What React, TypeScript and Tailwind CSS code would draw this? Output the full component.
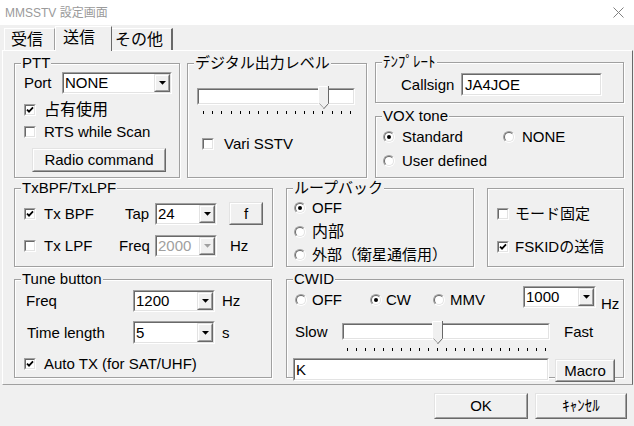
import React from "react";

type Kids = { children?: React.ReactNode; className?: string };

function Sunken({ children, className = "" }: Kids) {
  return (
    <div className={`border border-t-[#a0a0a0] border-l-[#a0a0a0] border-r-white border-b-white ${className}`}>
      <div className="h-full w-full border border-t-[#696969] border-l-[#696969] border-r-[#e3e3e3] border-b-[#e3e3e3] bg-white">
        {children}
      </div>
    </div>
  );
}

function Raised({ children, className = "" }: Kids) {
  return (
    <div className={`border border-t-[#e3e3e3] border-l-[#e3e3e3] border-r-[#696969] border-b-[#696969] bg-[#f0f0f0] ${className}`}>
      <div className="flex h-full w-full items-center justify-center border border-t-white border-l-white border-r-[#a0a0a0] border-b-[#a0a0a0]">
        {children}
      </div>
    </div>
  );
}

function Group({ label, children, className = "" }: Kids & { label?: string }) {
  return (
    <div className={`relative border border-[#a0a0a0] shadow-[inset_1px_1px_0_#fff,1px_1px_0_#fff] ${className}`}>
      {label && (
        <span className="absolute -top-[9px] left-[6px] bg-[#f0f0f0] px-px leading-[16px]">{label}</span>
      )}
      {children}
    </div>
  );
}

function Arrow({ disabled }: { disabled?: boolean }) {
  return (
    <svg width="7" height="4" viewBox="0 0 7 4">
      <path d="M0 0 H7 L3.5 3.8 Z" fill={disabled ? "#a0a0a0" : "#000"} />
    </svg>
  );
}

function Combo({ value, className = "", disabled }: { value: string; className?: string; disabled?: boolean }) {
  return (
    <Sunken className={className}>
      <div className="flex h-full">
        <span className={`flex flex-1 items-center pl-[1px] ${disabled ? "text-[#a0a0a0]" : ""}`}>{value}</span>
        <Raised className="h-full w-[16px]">
          <Arrow disabled={disabled} />
        </Raised>
      </div>
    </Sunken>
  );
}

function CheckBox({ on }: { on?: boolean }) {
  return (
    <span className="block h-[12px] w-[12px] shrink-0 border border-t-[#a0a0a0] border-l-[#a0a0a0] border-r-white border-b-white">
      <span className="flex h-full w-full items-center justify-center border border-t-[#696969] border-l-[#696969] border-r-[#e3e3e3] border-b-[#e3e3e3] bg-white">
        {on && (
          <svg width="8" height="8" viewBox="0 0 8 8">
            <path d="M1 3.6 L3 5.6 L7 1.4" stroke="#000" strokeWidth="1.8" fill="none" />
          </svg>
        )}
      </span>
    </span>
  );
}

function Radio({ on }: { on?: boolean }) {
  return (
    <span className="block h-[12px] w-[12px] shrink-0 rounded-full border border-t-[#a0a0a0] border-l-[#a0a0a0] border-r-white border-b-white">
      <span className="flex h-full w-full items-center justify-center rounded-full border border-t-[#696969] border-l-[#696969] border-r-[#e3e3e3] border-b-[#e3e3e3] bg-white">
        {on && <span className="block h-[4px] w-[4px] rounded-full bg-black" />}
      </span>
    </span>
  );
}

function Thumb({ className = "" }: { className?: string }) {
  return (
    <svg width="11" height="24" viewBox="0 0 11 24" className={`absolute -top-[2px] ${className}`}>
      <path d="M0.5 17.5 V0.5 H10.5 V17.5 L5.5 23 Z" fill="#f0f0f0" />
      <path d="M0.5 17.5 V0.5 H9.5" stroke="#fff" fill="none" />
      <path d="M10.5 0 V17.5 L5.5 23" stroke="#696969" fill="none" />
      <path d="M1.5 17.5 L5.5 21.8" stroke="#a0a0a0" fill="none" />
    </svg>
  );
}

function Ticks({ n, className = "" }: { n: number; className?: string }) {
  return (
    <div className={`flex h-[3px] justify-between ${className}`}>
      {Array.from({ length: n }, (_, i) => (
        <span key={i} className="block h-[3px] w-px bg-black" />
      ))}
    </div>
  );
}

export default function App() {
  return (
    <div className="relative h-[426px] w-[634px] overflow-hidden bg-[#f0f0f0] font-['Liberation_Sans','Noto_Sans_CJK_JP',sans-serif] text-[15px] leading-[18px] text-black">
      {/* title bar */}
      <div className="flex h-[25px] items-center justify-between bg-white pl-[5px] pr-[10px]">
        <span className="text-[12px] text-[#9a9a9a]">MMSSTV 設定画面</span>
        <svg width="11" height="11" viewBox="0 0 11 11">
          <path d="M0.5 0.5 L10.5 10.5 M10.5 0.5 L0.5 10.5" stroke="#808080" />
        </svg>
      </div>

      {/* tabs */}
      <div className="flex h-[25px] items-end pl-[4px] text-[16px]">
        <div className="flex h-[22px] w-[51px] items-center border-t border-l border-r border-t-white border-l-white border-r-[#a0a0a0] pl-[6px]">
          受信
        </div>
        <div className="relative z-10 -mb-px flex h-[25px] w-[57px] items-center border-t border-l border-r border-t-white border-l-white border-r-[#696969] bg-[#f0f0f0] pb-[2px] pl-[7px]">
          送信
        </div>
        <div className="flex h-[22px] w-[61px] items-center border-t border-r-2 border-t-white border-r-[#696969] pl-[3px]">
          その他
        </div>
      </div>

      {/* panel */}
      <div className="ml-[2px] h-[335px] w-[631px] border border-t-white border-l-white border-r-[#696969] border-b-[#a0a0a0] pl-[11px] pt-[11px]">
        {/* row 1 */}
        <div className="flex items-start">
          <Group label="PTT" className="mt-px h-[115px] w-[166px]">
            <div className="flex flex-col pl-[9px]">
              <div className="mt-[8px] flex h-[22px] items-center">
                <span className="w-[38px]">Port</span>
                <Combo value="NONE" className="h-[22px] w-[110px]" />
              </div>
              <div className="mt-[7px] flex h-[18px] items-center">
                <CheckBox on />
                <span className="ml-[8px] text-[16px]">占有使用</span>
              </div>
              <div className="mt-[4px] flex h-[18px] items-center">
                <CheckBox />
                <span className="ml-[8px]">RTS while Scan</span>
              </div>
              <Raised className="ml-[8px] mt-[7px] h-[24px] w-[134px]">Radio command</Raised>
            </div>
          </Group>

          <Group label="デジタル出力レベル" className="ml-[7px] mt-px h-[115px] w-[180px]">
            <div className="flex flex-col pl-[9px]">
              <div className="relative mt-[24px] w-[158px]">
                <Sunken className="h-[17px] w-[158px]" />
                <Thumb className="left-[121px]" />
              </div>
              <Ticks n={17} className="ml-[6px] mt-[6px] w-[148px]" />
              <div className="ml-[5px] mt-[21px] flex h-[18px] items-center">
                <CheckBox />
                <span className="ml-[10px]">Vari SSTV</span>
              </div>
            </div>
          </Group>

          <div className="ml-[8px] flex w-[249px] flex-col">
            <Group label="ﾃﾝﾌﾟﾚｰﾄ" className="h-[41px]">
              <div className="mt-[10px] flex items-center pl-[25px]">
                <span className="w-[60px]">Callsign</span>
                <Sunken className="h-[23px] w-[141px]">
                  <span className="flex h-full items-center pl-[2px]">JA4JOE</span>
                </Sunken>
              </div>
            </Group>
            <Group label="VOX tone" className="mt-[13px] h-[62px]">
              <div className="flex flex-col pl-[7px]">
                <div className="mt-[11px] flex h-[18px] items-center">
                  <div className="flex w-[120px] items-center">
                    <Radio on />
                    <span className="ml-[7px]">Standard</span>
                  </div>
                  <Radio />
                  <span className="ml-[7px]">NONE</span>
                </div>
                <div className="mt-[6px] flex h-[18px] items-center">
                  <Radio />
                  <span className="ml-[7px]">User defined</span>
                </div>
              </div>
            </Group>
          </div>
        </div>

        {/* row 2 */}
        <div className="mt-[10px] flex items-start">
          <Group label="TxBPF/TxLPF" className="h-[79px] w-[259px]">
            <div className="flex flex-col pl-[9px]">
              <div className="mt-[13px] flex h-[23px] items-center">
                <div className="flex w-[101px] items-center">
                  <CheckBox on />
                  <span className="ml-[8px]">Tx BPF</span>
                </div>
                <span className="w-[30px]">Tap</span>
                <Combo value="24" className="h-[22px] w-[62px]" />
                <Raised className="ml-[12px] h-[23px] w-[34px]">f</Raised>
              </div>
              <div className="mt-[10px] flex h-[22px] items-center">
                <div className="flex w-[95px] items-center">
                  <CheckBox />
                  <span className="ml-[8px]">Tx LPF</span>
                </div>
                <span className="w-[36px]">Freq</span>
                <Combo value="2000" disabled className="h-[22px] w-[62px]" />
                <span className="ml-[13px]">Hz</span>
              </div>
            </div>
          </Group>

          <Group label="ループバック" className="ml-[13px] h-[79px] w-[188px]">
            <div className="flex flex-col pl-[7px]">
              <div className="mt-[10px] flex h-[18px] items-center">
                <Radio on />
                <span className="ml-[6px]">OFF</span>
              </div>
              <div className="mt-[6px] flex h-[18px] items-center">
                <Radio />
                <span className="ml-[6px] text-[16px]">内部</span>
              </div>
              <div className="mt-[5px] flex h-[18px] items-center">
                <Radio />
                <span className="ml-[6px]">外部（衛星通信用）</span>
              </div>
            </div>
          </Group>

          <Group className="ml-[13px] h-[79px] w-[137px]">
            <div className="flex flex-col pl-[9px]">
              <div className="mt-[16px] flex h-[18px] items-center">
                <CheckBox />
                <span className="ml-[6px]">モード固定</span>
              </div>
              <div className="mt-[15px] flex h-[18px] items-center">
                <CheckBox on />
                <span className="ml-[6px]">FSKIDの送信</span>
              </div>
            </div>
          </Group>
        </div>

        {/* row 3 */}
        <div className="mt-[12px] flex items-start">
          <Group label="Tune button" className="h-[99px] w-[258px]">
            <div className="flex flex-col pl-[9px]">
              <div className="mt-[10px] flex h-[22px] items-center">
                <span className="w-[109px] pl-[2px]">Freq</span>
                <Combo value="1200" className="h-[22px] w-[82px]" />
                <span className="ml-[7px]">Hz</span>
              </div>
              <div className="mt-[9px] flex h-[23px] items-center">
                <span className="w-[109px] pl-[3px]">Time length</span>
                <Combo value="5" className="h-[23px] w-[82px]" />
                <span className="ml-[7px]">s</span>
              </div>
              <div className="mt-[11px] flex h-[18px] items-center">
                <CheckBox on />
                <span className="ml-[8px]">Auto TX (for SAT/UHF)</span>
              </div>
            </div>
          </Group>

          <Group label="CWID" className="ml-[14px] h-[99px] w-[338px]">
            <div className="flex flex-col pl-[8px]">
              <div className="mt-[6px] flex items-start">
                <div className="mt-[5px] flex h-[18px] w-[75px] items-center">
                  <Radio />
                  <span className="ml-[5px]">OFF</span>
                </div>
                <div className="mt-[5px] flex h-[18px] w-[63px] items-center">
                  <Radio on />
                  <span className="ml-[4px]">CW</span>
                </div>
                <div className="mt-[5px] flex h-[18px] w-[90px] items-center">
                  <Radio />
                  <span className="ml-[5px]">MMV</span>
                </div>
                <Combo value="1000" className="h-[22px] w-[73px]" />
                <span className="ml-[5px] mt-[9px]">Hz</span>
              </div>
              <div className="mt-[10px] flex items-start">
                <span className="w-[47px] leading-[18px]">Slow</span>
                <div className="relative w-[208px]">
                  <Sunken className="h-[17px] w-[208px]" />
                  <Thumb className="left-[90px]" />
                </div>
                <span className="ml-[14px] leading-[18px]">Fast</span>
              </div>
              <Ticks n={23} className="ml-[52px] mt-[7px] w-[199px]" />
              <div className="mt-[7px] flex items-start">
                <Sunken className="-ml-[2px] h-[23px] w-[256px]">
                  <span className="flex h-full items-center pl-[1px]">K</span>
                </Sunken>
                <Raised className="ml-[6px] mt-px h-[23px] w-[60px]">Macro</Raised>
              </div>
            </div>
          </Group>
        </div>
      </div>

      {/* bottom buttons */}
      <div className="flex justify-end pr-[7px] pt-[8px]">
        <Raised className="h-[26px] w-[94px]">OK</Raised>
        <Raised className="ml-[7px] h-[26px] w-[92px]">ｷｬﾝｾﾙ</Raised>
      </div>
    </div>
  );
}
